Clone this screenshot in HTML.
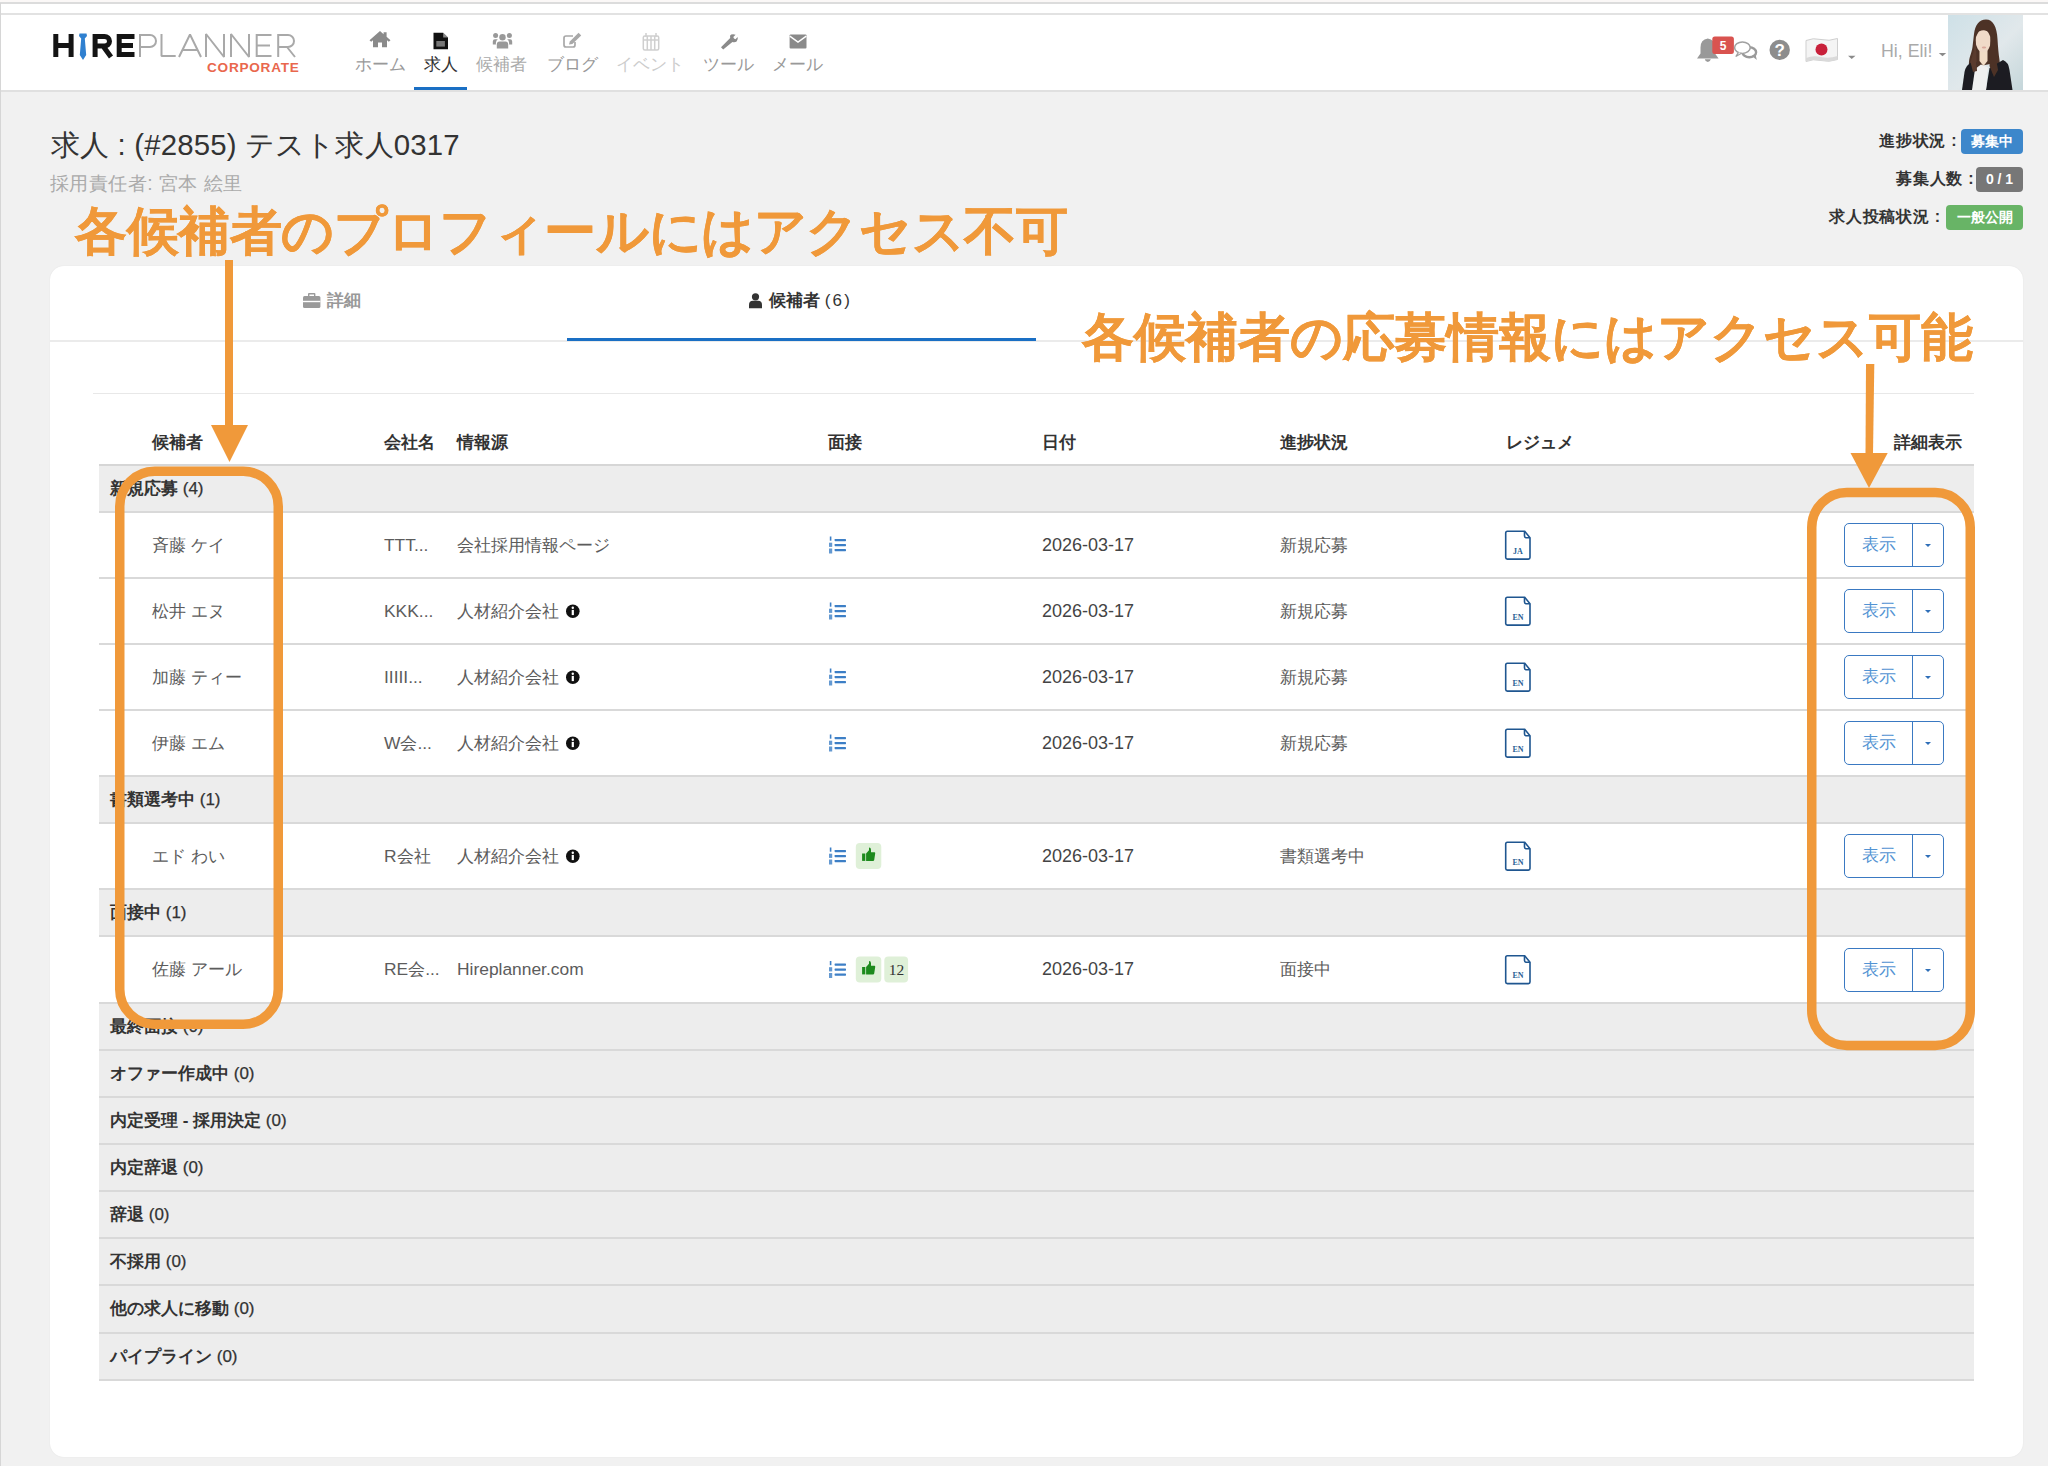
<!DOCTYPE html><html lang="ja"><head><meta charset="utf-8"><title>HirePlanner</title><style>
*{box-sizing:border-box;margin:0;padding:0}
html,body{width:2048px;height:1466px;overflow:hidden}
body{background:#f1f1f1;font-family:"Liberation Sans",sans-serif;color:#333;position:relative}
.a{position:absolute;white-space:nowrap}
.r{position:absolute;left:0;top:0}
.t17{font-size:17px;line-height:20px}
.hd{font-size:17px;line-height:20px;font-weight:bold;color:#333}
.grp{position:absolute;left:99px;width:1875px;background:#ededed}
.ln{position:absolute;left:99px;width:1875px;height:2px;background:#d9d9d9}
.grp span{position:absolute;left:11px;font-size:17px;line-height:20px;font-weight:bold;color:#333}
.row{position:absolute;left:99px;width:1875px;background:#fff}
.cell{position:absolute;font-size:17.4px;line-height:22px;color:#5c5c5c;white-space:nowrap}
.dt{font-size:18px}
.btn{position:absolute;left:1745px;width:100px;height:44px;border:1.6px solid #3a79c2;border-radius:5px;background:#fff}
.btn .t{position:absolute;left:0;top:0;width:68px;height:100%;border-right:1.6px solid #3a79c2;color:#5293d3;font-size:17px;line-height:41px;text-align:center}
.btn .cr{position:absolute;left:79.5px;top:19.5px;width:0;height:0;border-left:3.5px solid transparent;border-right:3.5px solid transparent;border-top:3.5px solid #2f6fb8}
.orange{color:#f0993a;font-weight:bold;font-size:52px;line-height:60px;-webkit-text-stroke:0.3px #f0993a}
.nv{position:absolute;top:55px;font-size:17px;line-height:20px;white-space:nowrap}
.lbl{position:absolute;font-size:16px;line-height:20px;font-weight:bold;color:#333;white-space:nowrap;letter-spacing:0.75px}
.bdg{position:absolute;height:25px;border-radius:4px;color:#fff;font-size:14px;font-weight:bold;line-height:25px;text-align:center}
</style></head><body>
<div class="a" style="left:0;top:0;width:2048px;height:2px;background:#fbf8f7"></div>
<div class="a" style="left:0;top:2px;width:2048px;height:2px;background:#dcdcdc"></div>
<div class="a" style="left:1px;top:4px;width:2047px;height:9px;background:#fff"></div>
<div class="a" style="left:0;top:13px;width:2048px;height:2px;background:#e2e2e2"></div>
<div class="a" style="left:1px;top:15px;width:2047px;height:75px;background:#fff"></div>
<div class="a" style="left:0;top:90px;width:2048px;height:2px;background:#e0e0e0"></div>
<div class="a" style="left:0;top:3px;width:1px;height:1463px;background:#d6d6d6"></div>
<div class="nv" style="left:355px;color:#999">ホーム</div>
<div class="nv" style="left:424px;color:#333">求人</div>
<div class="nv" style="left:476px;color:#aaa">候補者</div>
<div class="nv" style="left:547px;color:#999">ブログ</div>
<div class="nv" style="left:616px;color:#ccc">イベント</div>
<div class="nv" style="left:703px;color:#999">ツール</div>
<div class="nv" style="left:772px;color:#999">メール</div>
<div class="a" style="left:414px;top:87px;width:53px;height:3px;background:#1a6fc4"></div>
<div class="a" style="left:1881px;top:41px;font-size:17.8px;line-height:20px;color:#aaa">Hi, Eli!</div>
<div class="a" style="left:51px;top:126px;font-size:29.4px;line-height:38px;color:#333;letter-spacing:0.15px">求人 : (#2855) テスト求人0317</div>
<div class="a" style="left:50px;top:171px;font-size:19.4px;line-height:24px;color:#aaa;letter-spacing:0.45px">採用責任者: 宮本 絵里</div>
<div class="lbl" style="left:1879px;top:131px">進捗状況 :</div>
<div class="bdg" style="left:1961px;top:129px;width:62px;background:#3d87cb">募集中</div>
<div class="lbl" style="left:1896px;top:169px">募集人数 :</div>
<div class="bdg" style="left:1976px;top:167px;width:47px;background:#777">0 / 1</div>
<div class="lbl" style="left:1829px;top:207px">求人投稿状況 :</div>
<div class="bdg" style="left:1946px;top:205px;width:77px;background:#68b466">一般公開</div>
<div class="a" style="left:50px;top:266px;width:1973px;height:1191px;background:#fff;border-radius:14px;box-shadow:0 0 1.5px rgba(0,0,0,0.08)"></div>
<div class="a" style="left:50px;top:340px;width:1973px;height:2px;background:#ebebeb"></div>
<div class="a" style="left:567px;top:338px;width:469px;height:3px;background:#1a6fc4"></div>
<div class="a hd" style="left:327px;top:291px;color:#999">詳細</div>
<div class="a hd" style="left:769px;top:291px">候補者 <span style="font-weight:normal;letter-spacing:2.2px">(6)</span></div>
<div class="a" style="left:93px;top:393px;width:1881px;height:1px;background:#e8e8e8"></div>
<div class="a" style="left:99px;top:464px;width:1875px;height:2px;background:#d6d6d6"></div>
<div class="a hd" style="left:152px;top:433px">候補者</div>
<div class="a hd" style="left:384px;top:433px">会社名</div>
<div class="a hd" style="left:457px;top:433px">情報源</div>
<div class="a hd" style="left:828px;top:433px">面接</div>
<div class="a hd" style="left:1042px;top:433px">日付</div>
<div class="a hd" style="left:1280px;top:433px">進捗状況</div>
<div class="a hd" style="left:1506px;top:433px">レジュメ</div>
<div class="a hd" style="left:1894px;top:433px">詳細表示</div>
<div class="grp" style="top:466px;height:46px"><span style="top:13px">新規応募 <b style="font-weight:normal;-webkit-text-stroke:0.25px #333">(4)</b></span></div>
<div class="row" style="top:512px;height:66px">
<div class="cell" style="left:53px;top:22px">斉藤 ケイ</div>
<div class="cell" style="left:285px;top:22px">TTT...</div>
<div class="cell" style="left:358px;top:22px">会社採用情報ページ</div>
<div class="cell" style="left:943px;top:22px;font-size:18px;color:#444">2026-03-17</div>
<div class="cell" style="left:1181px;top:22px">新規応募</div>
<div class="btn" style="top:11px"><div class="t">表示</div><div class="cr"></div></div>
</div>
<div class="row" style="top:578px;height:66px">
<div class="cell" style="left:53px;top:22px">松井 エヌ</div>
<div class="cell" style="left:285px;top:22px">KKK...</div>
<div class="cell" style="left:358px;top:22px">人材紹介会社</div>
<div class="cell" style="left:943px;top:22px;font-size:18px;color:#444">2026-03-17</div>
<div class="cell" style="left:1181px;top:22px">新規応募</div>
<div class="btn" style="top:11px"><div class="t">表示</div><div class="cr"></div></div>
</div>
<div class="row" style="top:644px;height:66px">
<div class="cell" style="left:53px;top:22px">加藤 ティー</div>
<div class="cell" style="left:285px;top:22px">IIIII...</div>
<div class="cell" style="left:358px;top:22px">人材紹介会社</div>
<div class="cell" style="left:943px;top:22px;font-size:18px;color:#444">2026-03-17</div>
<div class="cell" style="left:1181px;top:22px">新規応募</div>
<div class="btn" style="top:11px"><div class="t">表示</div><div class="cr"></div></div>
</div>
<div class="row" style="top:710px;height:66px">
<div class="cell" style="left:53px;top:22px">伊藤 エム</div>
<div class="cell" style="left:285px;top:22px">W会...</div>
<div class="cell" style="left:358px;top:22px">人材紹介会社</div>
<div class="cell" style="left:943px;top:22px;font-size:18px;color:#444">2026-03-17</div>
<div class="cell" style="left:1181px;top:22px">新規応募</div>
<div class="btn" style="top:11px"><div class="t">表示</div><div class="cr"></div></div>
</div>
<div class="grp" style="top:776px;height:47px"><span style="top:14px">書類選考中 <b style="font-weight:normal;-webkit-text-stroke:0.25px #333">(1)</b></span></div>
<div class="row" style="top:823px;height:66px">
<div class="cell" style="left:53px;top:22px">エド わい</div>
<div class="cell" style="left:285px;top:22px">R会社</div>
<div class="cell" style="left:358px;top:22px">人材紹介会社</div>
<div class="cell" style="left:943px;top:22px;font-size:18px;color:#444">2026-03-17</div>
<div class="cell" style="left:1181px;top:22px">書類選考中</div>
<div class="btn" style="top:11px"><div class="t">表示</div><div class="cr"></div></div>
</div>
<div class="grp" style="top:889px;height:47px"><span style="top:14px">面接中 <b style="font-weight:normal;-webkit-text-stroke:0.25px #333">(1)</b></span></div>
<div class="row" style="top:936px;height:67px">
<div class="cell" style="left:53px;top:22px">佐藤 アール</div>
<div class="cell" style="left:285px;top:22px">RE会...</div>
<div class="cell" style="left:358px;top:22px">Hireplanner.com</div>
<div class="cell" style="left:943px;top:22px;font-size:18px;color:#444">2026-03-17</div>
<div class="cell" style="left:1181px;top:22px">面接中</div>
<div class="btn" style="top:12px"><div class="t">表示</div><div class="cr"></div></div>
</div>
<div class="grp" style="top:1003px;height:47px"><span style="top:14px">最終面接 <b style="font-weight:normal;-webkit-text-stroke:0.25px #333">(0)</b></span></div>
<div class="grp" style="top:1050px;height:47px"><span style="top:14px">オファー作成中 <b style="font-weight:normal;-webkit-text-stroke:0.25px #333">(0)</b></span></div>
<div class="grp" style="top:1097px;height:47px"><span style="top:14px">内定受理 - 採用決定 <b style="font-weight:normal;-webkit-text-stroke:0.25px #333">(0)</b></span></div>
<div class="grp" style="top:1144px;height:47px"><span style="top:14px">内定辞退 <b style="font-weight:normal;-webkit-text-stroke:0.25px #333">(0)</b></span></div>
<div class="grp" style="top:1191px;height:47px"><span style="top:14px">辞退 <b style="font-weight:normal;-webkit-text-stroke:0.25px #333">(0)</b></span></div>
<div class="grp" style="top:1238px;height:47px"><span style="top:14px">不採用 <b style="font-weight:normal;-webkit-text-stroke:0.25px #333">(0)</b></span></div>
<div class="grp" style="top:1285px;height:48px"><span style="top:14px">他の求人に移動 <b style="font-weight:normal;-webkit-text-stroke:0.25px #333">(0)</b></span></div>
<div class="grp" style="top:1333px;height:47px"><span style="top:14px">パイプライン <b style="font-weight:normal;-webkit-text-stroke:0.25px #333">(0)</b></span></div>
<div class="ln" style="top:511px"></div>
<div class="ln" style="top:577px"></div>
<div class="ln" style="top:643px"></div>
<div class="ln" style="top:709px"></div>
<div class="ln" style="top:775px"></div>
<div class="ln" style="top:822px"></div>
<div class="ln" style="top:888px"></div>
<div class="ln" style="top:935px"></div>
<div class="ln" style="top:1002px"></div>
<div class="ln" style="top:1049px"></div>
<div class="ln" style="top:1096px"></div>
<div class="ln" style="top:1143px"></div>
<div class="ln" style="top:1190px"></div>
<div class="ln" style="top:1237px"></div>
<div class="ln" style="top:1284px"></div>
<div class="ln" style="top:1332px"></div>
<div class="ln" style="top:1379px"></div>
<svg class="r" width="2048" height="1466" viewBox="0 0 2048 1466" style="position:absolute;left:0;top:0"><g fill="none" stroke="#141414" stroke-width="5"><path d="M55.8,34V57M71.1,34V57M55.8,45.5H71.1"/><path d="M95.1,34V57M95.1,36.5H104.5A5,4.75 0 0 1 104.5,46H95.1M103,46L111,57"/><path d="M119.2,34V57M117,36.5H134.5M119.2,45.5H133M117,54.5H134.5"/></g><path fill="#2f80d0" d="M79.5,33.5H86.5L87,36L84.8,38.5L86.2,55L83,60L79.8,55L81.2,38.5L79,36Z"/><g fill="none" stroke="#a9a9a9" stroke-width="2" stroke-linejoin="bevel"><path d="M140,34V57M140,35H150A6,6 0 0 1 150,47H140"/><path d="M161.5,34V56H175.7"/><path d="M179,57L190,34.5L201,57M182.8,50H197.2"/><path d="M206,57V34L224,57V34"/><path d="M231,57V34L249,57V34"/><path d="M256.7,34V57M256.7,35H271.5M256.7,45.5H270M256.7,56H271.5"/><path d="M278.2,34V57M278.2,35H288A6,6 0 0 1 288,47H278.2M287,47L295,57"/></g><text x="207" y="72.2" font-family="Liberation Sans" font-weight="bold" font-size="13.6" letter-spacing="0.75" fill="#e9674d">CORPORATE</text><path fill="#8a8a8a" d="M380,31L369.5,40.2L371.2,41.8L373,40.3V47.3H378V42.6H382V47.3H387V40.3L388.8,41.8L390.5,40.2L386.6,36.8V32.2H383.6V34.2Z"/><path fill="#111" d="M433.5,32.7H443.2L448,37.6V49.2H433.5Z"/><path fill="#fff" d="M443.2,32.7V37.6H448" opacity="0.5"/><rect x="436.3" y="41" width="8.6" height="5.6" fill="#777"/><g fill="#999"><circle cx="502.5" cy="37.3" r="3.2"/><path d="M496.8,48.6V44.5Q496.8,41.6 499.6,41.6H505.4Q508.2,41.6 508.2,44.5V48.6Z"/><circle cx="495.6" cy="35.5" r="2.5"/><path d="M492.8,44.6V41.6Q492.8,39.3 495,39.3H497.8Q496,40.5 495.9,42.8V44.6Z"/><circle cx="509.4" cy="35.5" r="2.5"/><path d="M512.2,44.6V41.6Q512.2,39.3 510,39.3H507.2Q509,40.5 509.1,42.8V44.6Z"/></g><g fill="none" stroke="#a8a8a8" stroke-width="1.7"><path d="M573,36H566Q564,36 564,38V45Q564,47 566,47H573Q575,47 575,45V42"/></g><path d="M569,44.5L569.8,41.5L578.6,32.8L581.2,35.4L572.4,44.1Z" fill="#a8a8a8"/><g fill="none" stroke="#cfcfcf" stroke-width="1.5"><rect x="643.3" y="36" width="15.4" height="14" rx="1.5"/><path d="M647.3,36V50M651,36V50M654.7,36V50M643.3,40H658.7"/><path d="M646,33V37M656,33V37"/></g><path fill="#8a8a8a" d="M721,47.3L730.2,38.1Q729.3,35.5 731.2,34.6Q733.2,33.6 735.6,34.8L733.3,37.1L734,38.6L735.5,39.3L737.6,37.1Q738.4,39.8 736.6,41.4Q735,42.6 732.4,41.9L723.2,49.4Z"/><rect x="789.6" y="34.6" width="16.9" height="13.9" rx="1" fill="#8a8a8a"/><path d="M789.8,36.2L798,42L806.3,36.2" fill="none" stroke="#fff" stroke-width="1.5"/><path fill="#999" d="M1707.8,38.5Q1700.5,39.5 1700.5,47.5V53.5L1697,58.5H1718.6L1715,53.5V47.5Q1715,39.5 1707.8,38.5Z"/><path fill="#999" d="M1704.8,59.2Q1705.5,62 1707.8,62Q1710.1,62 1710.8,59.2Z"/><rect x="1712.3" y="36.6" width="21.6" height="17.4" rx="2.5" fill="#d9534f"/><text x="1723.1" y="49.8" text-anchor="middle" font-family="Liberation Sans" font-weight="bold" font-size="12" fill="#fff">5</text><ellipse cx="1749.3" cy="52.3" rx="6.8" ry="5" fill="#fff" stroke="#9a9a9a" stroke-width="2.4"/><path d="M1752,56L1756.8,60L1755.5,54Z" fill="#9a9a9a"/><ellipse cx="1742.4" cy="47.7" rx="7.8" ry="5.7" fill="#fff" stroke="#a0a0a0" stroke-width="1.5"/><path d="M1738.5,52.3L1735.8,56.5L1741.5,53.2" fill="#fff" stroke="#a0a0a0" stroke-width="1.3"/><circle cx="1779.7" cy="49.9" r="10.2" fill="#8d8d8d"/><text x="1779.7" y="56.4" text-anchor="middle" font-family="Liberation Sans" font-weight="bold" font-size="17" fill="#fff">?</text><path d="M1806,40.5Q1813,37.5 1821,39.5Q1829,41.5 1837.5,38.5V59.5Q1829,62.5 1821,60.5Q1813,58.5 1806,61.5Z" fill="#f4f4f4" stroke="#cfcfcf" stroke-width="1"/><path d="M1806,58Q1813,55 1821,57Q1829,59 1837.5,56V59.5Q1829,62.5 1821,60.5Q1813,58.5 1806,61.5Z" fill="#dadada"/><circle cx="1821.5" cy="49.5" r="6" fill="#c8203a"/><path d="M1848,55.8H1855.5L1851.75,59Z" fill="#8a8a8a"/><path d="M1938.8,53H1946.2L1942.5,56.2Z" fill="#8a8a8a"/><defs><linearGradient id="pg" x1="0" y1="0" x2="1" y2="1"><stop offset="0" stop-color="#cde0e7"/><stop offset="0.55" stop-color="#e1e8eb"/><stop offset="1" stop-color="#c3d5d9"/></linearGradient></defs><filter id="pb" x="-5%" y="-5%" width="110%" height="110%"><feGaussianBlur stdDeviation="0.45"/></filter><clipPath id="pc"><rect x="1948" y="15" width="75" height="75"/></clipPath><g clip-path="url(#pc)"><g filter="url(#pb)"><rect x="1946" y="13" width="79" height="79" fill="url(#pg)"/><path fill="#4d3328" d="M1986,19.5C1979,19.5 1975,25 1974,34L1972.5,47C1971.5,54 1968.5,58 1969,65C1969.5,71 1973,74 1977,74L1980,66L1990,64L1996,78C2000,74 2000.5,68 1999.5,60C1998.5,53 1998,47 1997.5,39C1997,27 1993,19.5 1986,19.5Z"/><path fill="#1c1e22" d="M1962,90L1964.5,72Q1966,64.5 1972.5,62L1977,62.5L1977.5,90Z"/><path fill="#1c1e22" d="M1986,90L1989.5,68L2003,60Q2008.5,62 2009.5,70L2012.5,90Z"/><path fill="#f0f0f0" d="M1972,90L1975,69L1981,64.5L1988,67.5L1986,90Z"/><path fill="#f1dcc6" d="M1979.5,50H1987.5V61L1983.5,66L1979.5,61Z"/><ellipse cx="1983.2" cy="41" rx="7.6" ry="11.3" fill="#f0dac8"/><ellipse cx="1984" cy="47.5" rx="2.2" ry="0.9" fill="#d9a79a"/><path fill="#4d3328" d="M1975.2,37C1975.5,26 1981,21.5 1986.5,22C1992.5,23 1995,29 1994.5,38L1992,48L1991,34C1988,30 1983,29.5 1978.5,31.5Z"/><path fill="#4d3328" d="M1990.5,36L1994.5,38L1996,58L1998,70L1994,77L1989.5,66Z"/><path fill="#5a3b2e" d="M1975.5,38L1973.5,52L1970.5,62L1973,72L1977,71L1976.5,58Z"/></g></g><g fill="#9a9a9a"><rect x="303" y="296" width="17.4" height="12" rx="1.5"/><path d="M308,296V294Q308,293 309,293H314.4Q315.4,293 315.4,294V296H314V294.4H309.4V296Z"/></g><rect x="303" y="300.8" width="17.4" height="1.4" fill="#fff"/><g fill="#333"><circle cx="755.5" cy="296.8" r="3.6"/><path d="M749,308.2V305Q749,300.8 753,300.8H758Q762,300.8 762,305V308.2Z"/></g><g fill="#3d7fc6"><rect x="834.6" y="538.9" width="11.4" height="2.3" rx="0.6"/><rect x="834.6" y="543.9" width="11.4" height="2.3" rx="0.6"/><rect x="834.6" y="548.9" width="11.4" height="2.3" rx="0.6"/><rect x="829.8" y="536.5" width="1.6" height="4.2"/><rect x="829" y="542.7" width="3.2" height="4.2" opacity="0.8"/><rect x="829" y="548.5" width="3.2" height="5" opacity="0.8"/></g><g fill="none" stroke="#1f5690" stroke-width="1.6"><path d="M1524.7,531.2H1507.4Q1505.7,531.2 1505.7,532.9V557.5Q1505.7,559.1 1507.4,559.1H1528.4Q1530,559.1 1530,557.5V537.7Z"/><path d="M1524.5,531.5V536.0Q1524.5,537.7 1526.2,537.7H1530"/></g><text x="1518" y="553.7" text-anchor="middle" font-family="Liberation Serif" font-weight="bold" font-size="8" fill="#2a5f95">JA</text><g fill="#3d7fc6"><rect x="834.6" y="604.9" width="11.4" height="2.3" rx="0.6"/><rect x="834.6" y="609.9" width="11.4" height="2.3" rx="0.6"/><rect x="834.6" y="614.9" width="11.4" height="2.3" rx="0.6"/><rect x="829.8" y="602.5" width="1.6" height="4.2"/><rect x="829" y="608.7" width="3.2" height="4.2" opacity="0.8"/><rect x="829" y="614.5" width="3.2" height="5" opacity="0.8"/></g><circle cx="572.8" cy="611.3" r="6.8" fill="#111"/><rect x="571.6999999999999" y="609.9" width="2.2" height="5.2" fill="#fff"/><circle cx="572.8" cy="607.6999999999999" r="1.2" fill="#fff"/><g fill="none" stroke="#1f5690" stroke-width="1.6"><path d="M1524.7,597.2H1507.4Q1505.7,597.2 1505.7,598.9V623.5Q1505.7,625.1 1507.4,625.1H1528.4Q1530,625.1 1530,623.5V603.7Z"/><path d="M1524.5,597.5V602.0Q1524.5,603.7 1526.2,603.7H1530"/></g><text x="1518" y="619.7" text-anchor="middle" font-family="Liberation Serif" font-weight="bold" font-size="8" fill="#2a5f95">EN</text><g fill="#3d7fc6"><rect x="834.6" y="670.9" width="11.4" height="2.3" rx="0.6"/><rect x="834.6" y="675.9" width="11.4" height="2.3" rx="0.6"/><rect x="834.6" y="680.9" width="11.4" height="2.3" rx="0.6"/><rect x="829.8" y="668.5" width="1.6" height="4.2"/><rect x="829" y="674.7" width="3.2" height="4.2" opacity="0.8"/><rect x="829" y="680.5" width="3.2" height="5" opacity="0.8"/></g><circle cx="572.8" cy="677.3" r="6.8" fill="#111"/><rect x="571.6999999999999" y="675.9" width="2.2" height="5.2" fill="#fff"/><circle cx="572.8" cy="673.6999999999999" r="1.2" fill="#fff"/><g fill="none" stroke="#1f5690" stroke-width="1.6"><path d="M1524.7,663.2H1507.4Q1505.7,663.2 1505.7,664.9V689.5Q1505.7,691.1 1507.4,691.1H1528.4Q1530,691.1 1530,689.5V669.7Z"/><path d="M1524.5,663.5V668.0Q1524.5,669.7 1526.2,669.7H1530"/></g><text x="1518" y="685.7" text-anchor="middle" font-family="Liberation Serif" font-weight="bold" font-size="8" fill="#2a5f95">EN</text><g fill="#3d7fc6"><rect x="834.6" y="736.9" width="11.4" height="2.3" rx="0.6"/><rect x="834.6" y="741.9" width="11.4" height="2.3" rx="0.6"/><rect x="834.6" y="746.9" width="11.4" height="2.3" rx="0.6"/><rect x="829.8" y="734.5" width="1.6" height="4.2"/><rect x="829" y="740.7" width="3.2" height="4.2" opacity="0.8"/><rect x="829" y="746.5" width="3.2" height="5" opacity="0.8"/></g><circle cx="572.8" cy="743.3" r="6.8" fill="#111"/><rect x="571.6999999999999" y="741.9" width="2.2" height="5.2" fill="#fff"/><circle cx="572.8" cy="739.6999999999999" r="1.2" fill="#fff"/><g fill="none" stroke="#1f5690" stroke-width="1.6"><path d="M1524.7,729.2H1507.4Q1505.7,729.2 1505.7,730.9V755.5Q1505.7,757.1 1507.4,757.1H1528.4Q1530,757.1 1530,755.5V735.7Z"/><path d="M1524.5,729.5V734.0Q1524.5,735.7 1526.2,735.7H1530"/></g><text x="1518" y="751.7" text-anchor="middle" font-family="Liberation Serif" font-weight="bold" font-size="8" fill="#2a5f95">EN</text><g fill="#3d7fc6"><rect x="834.6" y="849.9" width="11.4" height="2.3" rx="0.6"/><rect x="834.6" y="854.9" width="11.4" height="2.3" rx="0.6"/><rect x="834.6" y="859.9" width="11.4" height="2.3" rx="0.6"/><rect x="829.8" y="847.5" width="1.6" height="4.2"/><rect x="829" y="853.7" width="3.2" height="4.2" opacity="0.8"/><rect x="829" y="859.5" width="3.2" height="5" opacity="0.8"/></g><circle cx="572.8" cy="856.3" r="6.8" fill="#111"/><rect x="571.6999999999999" y="854.9" width="2.2" height="5.2" fill="#fff"/><circle cx="572.8" cy="852.6999999999999" r="1.2" fill="#fff"/><rect x="855.8" y="843.0" width="25.5" height="26" rx="4" fill="#dff0d8"/><g fill="#1d8a1d"><rect x="862.0999999999999" y="853.5" width="3.2" height="7.4"/><path d="M866.0999999999999,860.9V853.5L869.0,850.2V847.4Q871.0,847.4 871.0,849.8V852.3H874.4Q875.4,852.3 875.1999999999999,853.6L874.1999999999999,860.0Q874.0,860.9 873.0,860.9Z"/></g><g fill="none" stroke="#1f5690" stroke-width="1.6"><path d="M1524.7,842.2H1507.4Q1505.7,842.2 1505.7,843.9V868.5Q1505.7,870.1 1507.4,870.1H1528.4Q1530,870.1 1530,868.5V848.7Z"/><path d="M1524.5,842.5V847.0Q1524.5,848.7 1526.2,848.7H1530"/></g><text x="1518" y="864.7" text-anchor="middle" font-family="Liberation Serif" font-weight="bold" font-size="8" fill="#2a5f95">EN</text><g fill="#3d7fc6"><rect x="834.6" y="963.4" width="11.4" height="2.3" rx="0.6"/><rect x="834.6" y="968.4" width="11.4" height="2.3" rx="0.6"/><rect x="834.6" y="973.4" width="11.4" height="2.3" rx="0.6"/><rect x="829.8" y="961.0" width="1.6" height="4.2"/><rect x="829" y="967.2" width="3.2" height="4.2" opacity="0.8"/><rect x="829" y="973.0" width="3.2" height="5" opacity="0.8"/></g><rect x="855.8" y="956.5" width="25.5" height="26" rx="4" fill="#dff0d8"/><g fill="#1d8a1d"><rect x="862.0999999999999" y="967.0" width="3.2" height="7.4"/><path d="M866.0999999999999,974.4V967.0L869.0,963.7V960.9Q871.0,960.9 871.0,963.3V965.8H874.4Q875.4,965.8 875.1999999999999,967.1L874.1999999999999,973.5Q874.0,974.4 873.0,974.4Z"/></g><rect x="884.3" y="956.5" width="23.8" height="26" rx="4" fill="#dff0d8"/><text x="896.6" y="975.1" text-anchor="middle" font-family="Liberation Serif" font-size="15.5" fill="#333">12</text><g fill="none" stroke="#1f5690" stroke-width="1.6"><path d="M1524.7,955.7H1507.4Q1505.7,955.7 1505.7,957.4V982.0Q1505.7,983.6 1507.4,983.6H1528.4Q1530,983.6 1530,982.0V962.2Z"/><path d="M1524.5,956.0V960.5Q1524.5,962.2 1526.2,962.2H1530"/></g><text x="1518" y="978.2" text-anchor="middle" font-family="Liberation Serif" font-weight="bold" font-size="8" fill="#2a5f95">EN</text><rect x="225" y="260" width="8" height="166" fill="#f0993a"/><path d="M211,425H248L229.5,462Z" fill="#f0993a"/><path d="M1866,364H1874.3L1873,454H1865.5Z" fill="#f0993a"/><path d="M1850.5,453H1887.7L1869,488Z" fill="#f0993a"/><rect x="119.75" y="471.25" width="158.5" height="553" rx="35" fill="none" stroke="#f0993a" stroke-width="9.5"/><rect x="1811.75" y="492.5" width="158.5" height="553" rx="35" fill="none" stroke="#f0993a" stroke-width="9.5"/></svg>
<div class="orange a" style="left:75px;top:201px;font-size:51.7px;letter-spacing:-0.4px">各候補者のプロフィールにはアクセス不可</div>
<div class="orange a" style="left:1082px;top:307px;font-size:51.7px">各候補者の応募情報にはアクセス可能</div>
</body></html>
